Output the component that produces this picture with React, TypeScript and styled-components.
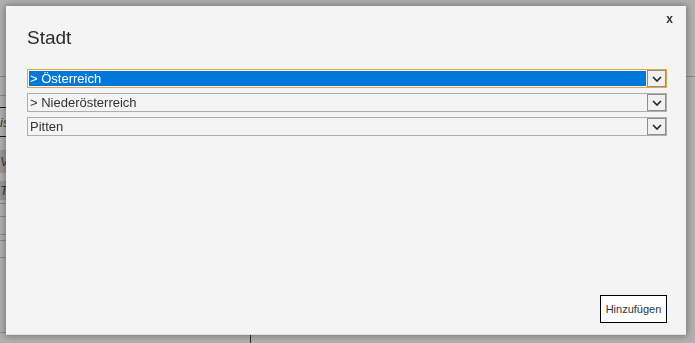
import React from 'react';
import styled, { createGlobalStyle } from 'styled-components';

const GlobalStyle = createGlobalStyle`
  html, body {
    margin: 0;
    padding: 0;
    width: 100%;
    height: 100%;
    overflow: hidden;
    background: #ffffff;
    font-family: "Liberation Sans", Arial, sans-serif;
  }
`;

const Page = styled.div`
  width: 695px;
  height: 343px;
  display: flex;
  flex-direction: column;
`;

const PageHeader = styled.div`
  height: 76px;
  flex-shrink: 0;
  border-bottom: 1px solid #c8c8c8;
`;

const PageBody = styled.div`
  flex: 1;
  display: grid;
  grid-template-columns: 251px 1fr;
`;

const PageColumn = styled.div<{ $border?: boolean }>`
  display: flex;
  flex-direction: column;
  border-right: ${(p) => (p.$border ? '1px solid #333' : 'none')};
`;

const PageRow = styled.div<{ $h: number; $line?: string; $shade?: string }>`
  height: ${(p) => p.$h}px;
  flex-shrink: 0;
  box-sizing: border-box;
  border-bottom: ${(p) => (p.$line ? `1px solid ${p.$line}` : 'none')};
  background: ${(p) => p.$shade || 'transparent'};
  font-size: 13px;
  color: #555;
  display: flex;
  align-items: center;
  font-style: italic;
`;

const Overlay = styled.div`
  position: fixed;
  inset: 0;
  background: rgba(0, 0, 0, 0.31);
`;

const Dialog = styled.div`
  position: fixed;
  top: 6px;
  left: 6px;
  width: 680px;
  height: 329px;
  box-sizing: border-box;
  background: #f4f4f4;
  border-bottom: 1px solid #dedede;
  box-shadow: 0 0 7px 1px rgba(0, 0, 0, 0.35);
  padding: 0 19px 11px 21px;
  display: flex;
  flex-direction: column;
`;

const Header = styled.div`
  display: flex;
  justify-content: space-between;
  align-items: flex-start;
  height: 63px;
`;

const Title = styled.h2`
  margin: 20px 0 0 0;
  font-size: 19px;
  font-weight: normal;
  color: #2b2b2b;
  line-height: 24px;
`;

const Close = styled.span`
  margin: 6px -6px 0 0;
  font-size: 12px;
  font-weight: bold;
  color: #333;
  line-height: 14px;
  cursor: pointer;
`;

const Fields = styled.div`
  display: flex;
  flex-direction: column;
  gap: 5px;
  flex: 1;
`;

const SelectBox = styled.div<{ $focused?: boolean }>`
  height: 19px;
  box-sizing: border-box;
  display: flex;
  border: 1px solid ${(p) => (p.$focused ? '#e5a63f' : '#adadad')};
  background: #f4f4f4;
`;

const Value = styled.div<{ $focused?: boolean }>`
  flex: 1;
  margin: 1px;
  padding-left: 1px;
  background: ${(p) => (p.$focused ? '#0078d7' : 'transparent')};
  color: ${(p) => (p.$focused ? '#ffffff' : '#333333')};
  font-size: 13px;
  line-height: 15px;
  white-space: nowrap;
  overflow: hidden;
`;

const Arrow = styled.div`
  width: 19px;
  box-sizing: border-box;
  border: 1px solid #8f8f8f;
  background: #f0f0f0;
  display: flex;
  align-items: center;
  justify-content: center;
`;

const Footer = styled.div`
  display: flex;
  justify-content: flex-end;
`;

const AddButton = styled.button`
  width: 67px;
  height: 28px;
  box-sizing: border-box;
  border: 1px solid #000;
  background: #ffffff;
  color: #333;
  font-family: "Liberation Sans", Arial, sans-serif;
  font-size: 11px;
  padding: 0;
  cursor: pointer;
`;

const Chevron = () => (
  <svg width="10" height="6" viewBox="0 0 10 6">
    <path d="M1 1 L5 5 L9 1" fill="none" stroke="#222" strokeWidth="1.6" />
  </svg>
);

const fields = [
  { label: '> Österreich', focused: true },
  { label: '> Niederösterreich' },
  { label: 'Pitten' },
];

const bgRows: { h: number; line?: string; shade?: string; text?: string }[] = [
  { h: 19, line: '#c8c8c8' },
  { h: 12, line: '#222' },
  { h: 29, line: '#222', text: 'is' },
  { h: 13 },
  { h: 23, shade: '#dcdcdc', text: 'V/' },
  { h: 8 },
  { h: 19, shade: '#dcdcdc', text: 'T/' },
  { h: 4, line: '#c8c8c8' },
  { h: 13, line: '#c8c8c8' },
  { h: 18, line: '#c8c8c8' },
  { h: 6, line: '#c8c8c8' },
  { h: 17, line: '#c8c8c8' },
  { h: 75, line: '#c8c8c8' },
];

export default function App() {
  return (
    <>
      <GlobalStyle />
      <Page>
        <PageHeader />
        <PageBody>
          <PageColumn $border>
            {bgRows.map((r, i) => (
              <PageRow key={i} $h={r.h} $line={r.line} $shade={r.shade}>
                {r.text}
              </PageRow>
            ))}
          </PageColumn>
          <PageColumn />
        </PageBody>
      </Page>
      <Overlay />
      <Dialog>
        <Header>
          <Title>Stadt</Title>
          <Close>x</Close>
        </Header>
        <Fields>
          {fields.map((f) => (
            <SelectBox key={f.label} $focused={f.focused}>
              <Value $focused={f.focused}>{f.label}</Value>
              <Arrow>
                <Chevron />
              </Arrow>
            </SelectBox>
          ))}
        </Fields>
        <Footer>
          <AddButton>Hinzufügen</AddButton>
        </Footer>
      </Dialog>
    </>
  );
}
